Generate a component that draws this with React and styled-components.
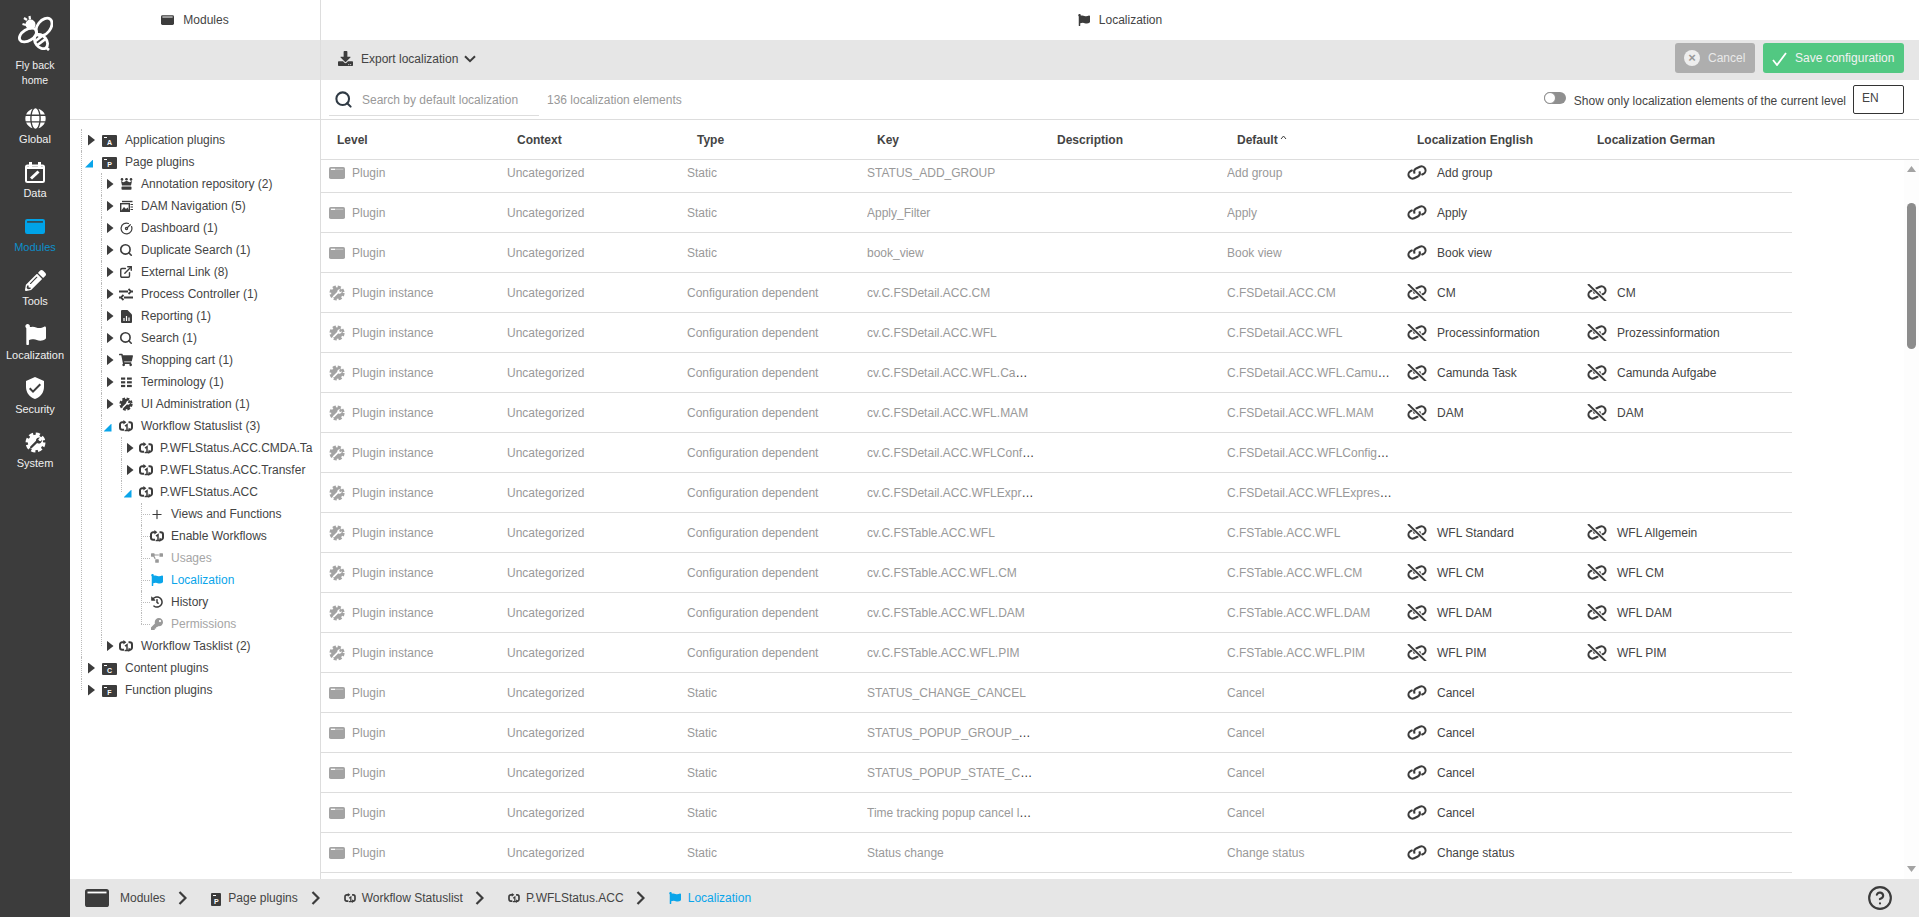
import React from "react";
import styled, { createGlobalStyle } from "styled-components";
import { Search, ExternalLink, Plus, CircleGauge, CircleHelp } from "lucide-react";
import { FaGlobe, FaPencilAlt, FaFlag, FaShoppingCart, FaProjectDiagram, FaHistory, FaKey, FaDownload } from "react-icons/fa";
import { MdVerifiedUser } from "react-icons/md";

const DARK = "#3c3c3c";
const BLUE = "#0aa5ea";

const GlobalStyle = createGlobalStyle`
    html, body {
        margin: 0;
        height: 100%;
        overflow: hidden;
    }
    body {
        font-family: "Liberation Sans", Arial, sans-serif;
        font-size: 12px;
        color: #444;
        background: #fff;
    }
    * {
        box-sizing: border-box;
    }
`;

function BeeLogo() {
    return (
        <svg width="36" height="36" viewBox="0 0 36 36" fill="none" stroke="#fff" strokeWidth="2.8">
            <circle cx="13.5" cy="9.5" r="5" fill="#fff" stroke="none" />
            <path d="M10 5 7 3M13 4.5 12.5 1M9 10 5.5 9" strokeWidth="2.2" />
            <ellipse cx="27" cy="12" rx="6.5" ry="10" transform="rotate(38 27 12)" />
            <ellipse cx="11" cy="20" rx="9.5" ry="5.6" transform="rotate(-32 11 20)" />
            <ellipse cx="24" cy="26.5" rx="5.6" ry="8" transform="rotate(-38 24 26.5)" />
            <path d="M18.5 26 25 21M20.5 30 28.5 24" />
            <path d="M29 32.5 32 35" />
        </svg>
    );
}

function CalendarIcon() {
    return (
        <svg width="20" height="21" viewBox="0 0 20 21" fill="none">
            <rect x="1" y="3.5" width="18" height="16.5" rx="1.5" stroke="#fff" strokeWidth="2" />
            <path d="M1 4.5h18v2.5H1z" fill="#fff" />
            <rect x="4" y="0" width="3" height="5" fill="#fff" />
            <rect x="13" y="0" width="3" height="5" fill="#fff" />
            <path d="M6 16.5 13.5 9.5" stroke="#fff" strokeWidth="3" />
        </svg>
    );
}

function WindowIcon({ width = 16, height = 12, color = DARK, bar = "#fff", shortBar }) {
    return (
        <svg width={width} height={height} viewBox="0 0 24 18">
            <rect x="0" y="0" width="24" height="18" rx="2.6" fill={color} />
            <rect x="2.5" y="2.6" width="19" height="1.8" fill={bar} opacity={shortBar ? 0.35 : 1} />
            {shortBar && <rect x="3" y="2.6" width="6" height="1.8" fill={bar} />}
        </svg>
    );
}

function GearWrench({ size = 14, color = DARK, cut = "#fff" }) {
    return (
        <svg width={size} height={size} viewBox="0 0 24 24" fill="none">
            <circle cx="12" cy="12" r="9.4" stroke={color} strokeWidth="4" strokeDasharray="4.6 2.78" />
            <circle cx="12" cy="12" r="8.8" fill={color} />
            <path d="M7 17.5 13.5 11" stroke={cut} strokeWidth="2.6" strokeLinecap="round" />
            <path d="M12.5 10.5a3.8 3.8 0 0 1 4.6-4.2l-2 2.2 1 1.6 2 .4 1.2-2a3.8 3.8 0 0 1-5 4.4z" fill={cut} />
        </svg>
    );
}

function LinkIcon({ broken }) {
    return (
        <svg width="20" height="17" viewBox="0 -2 20 17" fill="none" stroke={DARK} strokeWidth="2.1">
            <g transform="rotate(-25 10 6.5)">
                <path d="M7 2.5H5a4 4 0 0 0 0 8h4a4 4 0 0 0 3.6-4" />
                <path d="M13 10.5h2a4 4 0 0 0 0-8h-4a4 4 0 0 0-3.6 4" />
            </g>
            {broken && <path d="M1.5 -2 18.5 15" stroke="#fff" strokeWidth="3.8" />}
            {broken && <path d="M1 -2 19 15.5" strokeWidth="1.9" />}
        </svg>
    );
}

function ProcessIcon() {
    return (
        <svg width="14" height="13" viewBox="0 0 14 13" fill="none" stroke={DARK} strokeWidth="1.8">
            <path d="M0 3.5h9M11 3.5h3M9.5 1 12 3.5 9.5 6" />
            <path d="M14 9.5H5M3 9.5H0M4.5 7 2 9.5 4.5 12" />
        </svg>
    );
}

function ReportIcon() {
    return (
        <svg width="11" height="13" viewBox="0 0 11 13">
            <path d="M0 1a1 1 0 0 1 1-1h5.5L11 4.5V12a1 1 0 0 1-1 1H1a1 1 0 0 1-1-1z" fill={DARK} />
            <path d="M3 11V8M5.5 11V6M8 11V7.5" stroke="#fff" strokeWidth="1.2" />
        </svg>
    );
}

function GridListIcon() {
    return (
        <svg width="11" height="11" viewBox="0 0 11 11" fill={DARK}>
            <rect x="0" y="0.5" width="4.2" height="2.2" />
            <rect x="0" y="4.2" width="4.2" height="2.2" />
            <rect x="0" y="7.9" width="4.2" height="2.2" />
            <rect x="6" y="0.5" width="4.8" height="2.2" />
            <rect x="6" y="4.2" width="4.8" height="2.2" />
            <rect x="6" y="7.9" width="4.8" height="2.2" />
        </svg>
    );
}

function ImagesIcon() {
    return (
        <svg width="13" height="12" viewBox="0 0 13 12" fill="none">
            <path d="M2 1.5h10.5" stroke={DARK} strokeWidth="1.4" />
            <rect x="0.7" y="3.7" width="8.6" height="7.6" stroke={DARK} strokeWidth="1.4" />
            <path d="M1 11l3-4 2 2 1.5-1.5L9.5 11z" fill={DARK} />
            <path d="M10.5 4.5H13M10.5 7H13M10.5 9.5H13" stroke={DARK} strokeWidth="1.2" />
        </svg>
    );
}

function CrownIcon() {
    return (
        <svg width="13" height="12" viewBox="0 0 13 12" fill={DARK}>
            <circle cx="2" cy="1.4" r="1.3" />
            <circle cx="6.5" cy="1.2" r="1.3" />
            <circle cx="11" cy="1.4" r="1.3" />
            <path d="M1 3 3.5 4.2 6.5 2.8 9.5 4.2 12 3 11 7.6H2z" />
            <rect x="1.5" y="8.6" width="10" height="3.2" rx="0.8" />
        </svg>
    );
}

function WorkflowIcon({ size = 14 }) {
    return (
        <svg width={size} height={size - 2} viewBox="0 0 14 12" fill="none" stroke={DARK} strokeWidth="2">
            <path d="M5 2.2H3.2A2.2 2.2 0 0 0 1 4.4v3.2a2.2 2.2 0 0 0 2.2 2.2H5" />
            <path d="M9.5 9.8h1.3A2.2 2.2 0 0 0 13 7.6V4.4a2.2 2.2 0 0 0-2.2-2.2H9.5" />
            <path d="M4.4 0 7.4 2.2 4.4 4.4zM9.6 7.6 12 9.8 9.6 12z" fill={DARK} stroke="none" />
            <path d="M6 6.2 8 4.8v5.2M5.6 10.4h4.4" strokeWidth="1.5" />
        </svg>
    );
}

function Chevron() {
    return (
        <svg width="9" height="14" viewBox="0 0 9 14" fill="none" stroke={DARK} strokeWidth="2.2">
            <path d="M1.5 1 7.5 7 1.5 13" />
        </svg>
    );
}

const flag = (size, color) => <FaFlag size={size} color={color} />;
const workflow = <WorkflowIcon />;

const treeData = [
    { label: "Application plugins", badge: "A", top: true },
    {
        label: "Page plugins",
        badge: "P",
        top: true,
        open: true,
        children: [
            { label: "Annotation repository (2)", icon: <CrownIcon /> },
            { label: "DAM Navigation (5)", icon: <ImagesIcon /> },
            { label: "Dashboard (1)", icon: <CircleGauge size={13} strokeWidth={2.2} color={DARK} /> },
            { label: "Duplicate Search (1)", icon: <Search size={14} strokeWidth={2.8} color={DARK} /> },
            { label: "External Link (8)", icon: <ExternalLink size={14} strokeWidth={2.4} color={DARK} /> },
            { label: "Process Controller (1)", icon: <ProcessIcon /> },
            { label: "Reporting (1)", icon: <ReportIcon /> },
            { label: "Search (1)", icon: <Search size={14} strokeWidth={2.8} color={DARK} /> },
            { label: "Shopping cart (1)", icon: <FaShoppingCart size={14} color={DARK} /> },
            { label: "Terminology (1)", icon: <GridListIcon /> },
            { label: "UI Administration (1)", icon: <GearWrench size={14} /> },
            {
                label: "Workflow Statuslist (3)",
                icon: workflow,
                open: true,
                children: [
                    { label: "P.WFLStatus.ACC.CMDA.Ta", icon: workflow },
                    { label: "P.WFLStatus.ACC.Transfer", icon: workflow },
                    {
                        label: "P.WFLStatus.ACC",
                        icon: workflow,
                        open: true,
                        children: [
                            { label: "Views and Functions", leaf: true, icon: <Plus size={15} strokeWidth={2} color={DARK} /> },
                            { label: "Enable Workflows", leaf: true, icon: workflow },
                            { label: "Usages", leaf: true, disabled: true, icon: <FaProjectDiagram size={12} color="#999" /> },
                            { label: "Localization", leaf: true, active: true, icon: flag(12, BLUE) },
                            { label: "History", leaf: true, icon: <FaHistory size={12} color={DARK} /> },
                            { label: "Permissions", leaf: true, disabled: true, icon: <FaKey size={12} color="#999" /> },
                        ],
                    },
                ],
            },
            { label: "Workflow Tasklist (2)", icon: workflow },
        ],
    },
    { label: "Content plugins", badge: "C", top: true },
    { label: "Function plugins", badge: "F", top: true },
];

const plugin = (key, def) => ({ level: "Plugin", type: "Static", key, def, en: def, linked: true });
const instance = (key, def, en, de) => ({ level: "Plugin instance", type: "Configuration dependent", key, def, en, de });

const rows = [
    plugin("STATUS_ADD_GROUP", "Add group"),
    plugin("Apply_Filter", "Apply"),
    plugin("book_view", "Book view"),
    instance("cv.C.FSDetail.ACC.CM", "C.FSDetail.ACC.CM", "CM", "CM"),
    instance("cv.C.FSDetail.ACC.WFL", "C.FSDetail.ACC.WFL", "Processinformation", "Prozessinformation"),
    instance("cv.C.FSDetail.ACC.WFL.Camunda", "C.FSDetail.ACC.WFL.Camunda", "Camunda Task", "Camunda Aufgabe"),
    instance("cv.C.FSDetail.ACC.WFL.MAM", "C.FSDetail.ACC.WFL.MAM", "DAM", "DAM"),
    instance("cv.C.FSDetail.ACC.WFLConfiguration", "C.FSDetail.ACC.WFLConfiguration"),
    instance("cv.C.FSDetail.ACC.WFLExpression", "C.FSDetail.ACC.WFLExpression"),
    instance("cv.C.FSTable.ACC.WFL", "C.FSTable.ACC.WFL", "WFL Standard", "WFL Allgemein"),
    instance("cv.C.FSTable.ACC.WFL.CM", "C.FSTable.ACC.WFL.CM", "WFL CM", "WFL CM"),
    instance("cv.C.FSTable.ACC.WFL.DAM", "C.FSTable.ACC.WFL.DAM", "WFL DAM", "WFL DAM"),
    instance("cv.C.FSTable.ACC.WFL.PIM", "C.FSTable.ACC.WFL.PIM", "WFL PIM", "WFL PIM"),
    plugin("STATUS_CHANGE_CANCEL", "Cancel"),
    plugin("STATUS_POPUP_GROUP_CANCEL", "Cancel"),
    plugin("STATUS_POPUP_STATE_CANCEL", "Cancel"),
    plugin("Time tracking popup cancel label", "Cancel"),
    plugin("Status change", "Change status"),
];

const navItems = [
    { label: "Global", icon: <FaGlobe size={21} color="#fff" /> },
    { label: "Data", icon: <CalendarIcon /> },
    { label: "Modules", active: true, icon: <WindowIcon width={20} height={15} color="#00a3e8" bar={DARK} /> },
    { label: "Tools", icon: <FaPencilAlt size={21} color="#fff" /> },
    { label: "Localization", icon: <FaFlag size={21} color="#fff" /> },
    { label: "Security", icon: <MdVerifiedUser size={24} color="#fff" /> },
    { label: "System", icon: <GearWrench size={21} color="#fff" cut={DARK} /> },
];

const headers = ["Level", "Context", "Type", "Key", "Description", "Default", "Localization English", "Localization German"];

function TreeNode({ node, depth }) {
    return (
        <Node>
            <NodeRow>
                {node.leaf ? <LeafStub /> : (
                    <ToggleSlot $top={node.top}>
                        <Toggle $open={node.open} />
                    </ToggleSlot>
                )}
                <IconSlot $top={node.top} $tight={depth >= 2}>
                    {node.badge ? <PluginBadge>{node.badge}</PluginBadge> : node.icon}
                </IconSlot>
                <NodeLabel $active={node.active} $disabled={node.disabled}>{node.label}</NodeLabel>
            </NodeRow>
            {node.children && (
                <TreeList $nested>
                    {node.children.map((child) => <TreeNode key={child.label} node={child} depth={depth + 1} />)}
                </TreeList>
            )}
        </Node>
    );
}

function TableRow({ row }) {
    const isPlugin = row.level === "Plugin";
    return (
        <Row>
            <LevelCell>
                {isPlugin
                    ? <WindowIcon width={16} height={12} color="#a3a3a3" shortBar />
                    : <GearWrench size={16} color="#a3a3a3" />}
                <span>{row.level}</span>
            </LevelCell>
            <Cell><span>Uncategorized</span></Cell>
            <Cell><span>{row.type}</span></Cell>
            <Cell><span>{row.key}</span></Cell>
            <Cell />
            <Cell><span>{row.def}</span></Cell>
            <LocCell>
                {row.en && <LinkIcon broken={!row.linked} />}
                {row.en && <span>{row.en}</span>}
            </LocCell>
            <LocCell>
                {row.de && <LinkIcon broken />}
                {row.de && <span>{row.de}</span>}
            </LocCell>
        </Row>
    );
}

export default function App() {
    return (
        <>
            <GlobalStyle />
            <Shell>
                <Rail>
                    <LogoLink>
                        <BeeLogo />
                        <LogoLabel>Fly back<br />home</LogoLabel>
                    </LogoLink>
                    {navItems.map((item) => (
                        <NavItem key={item.label} $active={item.active}>
                            <NavIcon>{item.icon}</NavIcon>
                            <span>{item.label}</span>
                        </NavItem>
                    ))}
                </Rail>
                <Main>
                    <Panels>
                        <LeftPanel>
                            <PanelTitle>
                                <WindowIcon width={13} height={10} />
                                Modules
                            </PanelTitle>
                            <Band />
                            <LeftSpacer />
                            <Tree>
                                <TreeList>
                                    {treeData.map((node) => <TreeNode key={node.label} node={node} depth={0} />)}
                                </TreeList>
                            </Tree>
                        </LeftPanel>
                        <RightPanel>
                            <PanelTitle>
                                {flag(12, DARK)}
                                Localization
                            </PanelTitle>
                            <Toolbar>
                                <ExportButton>
                                    <FaDownload size={15} color={DARK} />
                                    <span>Export localization</span>
                                    <svg width="12" height="8" viewBox="0 0 12 8" fill="none" stroke={DARK} strokeWidth="2">
                                        <path d="M1 1.2 6 6.2 11 1.2" />
                                    </svg>
                                </ExportButton>
                                <ToolbarActions>
                                    <CancelButton>
                                        <CancelDot>×</CancelDot>
                                        Cancel
                                    </CancelButton>
                                    <SaveButton>
                                        <svg width="15" height="14" viewBox="0 0 15 14" fill="none" stroke="#fff" strokeWidth="1.8">
                                            <path d="M1 8 5 13 14 1" />
                                        </svg>
                                        Save configuration
                                    </SaveButton>
                                </ToolbarActions>
                            </Toolbar>
                            <SearchRow>
                                <SearchBox>
                                    <Search size={19} strokeWidth={2.6} color="#2f3a44" />
                                    <SearchInput placeholder="Search by default localization" />
                                </SearchBox>
                                <Count>136 localization elements</Count>
                                <FilterGroup>
                                    <ToggleSwitch />
                                    <FilterLabel>Show only localization elements of the current level</FilterLabel>
                                    <LangBox>EN</LangBox>
                                </FilterGroup>
                            </SearchRow>
                            <TableHead>
                                {headers.map((h) => (
                                    <HeadCell key={h}>
                                        {h}
                                        {h === "Default" && (
                                            <svg width="7" height="5" viewBox="0 0 7 5" fill="none" stroke={DARK} strokeWidth="1">
                                                <path d="M1 4 3.5 1 6 4" />
                                            </svg>
                                        )}
                                    </HeadCell>
                                ))}
                            </TableHead>
                            <TableBody>
                                <RowsClip>
                                    <Rows>
                                        {rows.map((row) => <TableRow key={row.key} row={row} />)}
                                    </Rows>
                                </RowsClip>
                                <ScrollTrack>
                                    <ScrollArrow />
                                    <ScrollThumb />
                                    <ScrollArrow $down />
                                </ScrollTrack>
                            </TableBody>
                        </RightPanel>
                    </Panels>
                    <Footer>
                        <Crumb>
                            <FooterLogo><WindowIcon width={24} height={18} /></FooterLogo>
                            <span>Modules</span>
                            <CrumbChevron><Chevron /></CrumbChevron>
                        </Crumb>
                        <Crumb>
                            <PluginBadge $small>P</PluginBadge>
                            <span>Page plugins</span>
                            <CrumbChevron><Chevron /></CrumbChevron>
                        </Crumb>
                        <Crumb $tight>
                            <WorkflowIcon size={12} />
                            <span>Workflow Statuslist</span>
                            <CrumbChevron><Chevron /></CrumbChevron>
                        </Crumb>
                        <Crumb $tight>
                            <WorkflowIcon size={12} />
                            <span>P.WFLStatus.ACC</span>
                            <CrumbChevron><Chevron /></CrumbChevron>
                        </Crumb>
                        <CurrentCrumb>
                            {flag(12, BLUE)}
                            <span>Localization</span>
                        </CurrentCrumb>
                        <HelpButton>
                            <CircleHelp size={26} strokeWidth={2} color={DARK} />
                        </HelpButton>
                    </Footer>
                </Main>
            </Shell>
        </>
    );
}

const Shell = styled.div`
    display: flex;
    height: 100vh;
    overflow: hidden;
`;

const Rail = styled.nav`
    width: 70px;
    flex-shrink: 0;
    background: ${DARK};
    color: #f0f0f0;
    padding-top: 15px;
    font-size: 11px;
`;

const LogoLink = styled.div`
    display: flex;
    flex-direction: column;
    align-items: center;
    margin-bottom: 16px;
`;

const LogoLabel = styled.div`
    margin-top: 7px;
    font-size: 10.5px;
    line-height: 15px;
    text-align: center;
`;

const NavItem = styled.div`
    height: 54px;
    display: flex;
    flex-direction: column;
    align-items: center;
    line-height: 14px;
    color: ${(p) => (p.$active ? "#0c8fca" : "#f0f0f0")};
`;

const NavIcon = styled.div`
    height: 28px;
    display: flex;
    align-items: center;
    justify-content: center;
`;

const Main = styled.main`
    flex: 1;
    min-width: 0;
    display: flex;
    flex-direction: column;
`;

const Panels = styled.div`
    flex: 1;
    min-height: 0;
    display: flex;
`;

const LeftPanel = styled.section`
    width: 250px;
    flex-shrink: 0;
    display: flex;
    flex-direction: column;
`;

const RightPanel = styled.section`
    flex: 1;
    min-width: 0;
    display: flex;
    flex-direction: column;
    border-left: 1px solid #ddd;
`;

const PanelTitle = styled.header`
    height: 40px;
    flex-shrink: 0;
    display: flex;
    align-items: center;
    justify-content: center;
    gap: 9px;
    color: #444;
`;

const Band = styled.div`
    height: 40px;
    flex-shrink: 0;
    background: #e6e6e6;
`;

const LeftSpacer = styled.div`
    height: 40px;
    flex-shrink: 0;
    border-bottom: 1px solid #ddd;
`;

const Tree = styled.div`
    flex: 1;
    padding: 9px 0 0 11px;
    overflow: hidden;
`;

const TreeList = styled.ul`
    list-style: none;
    margin: 0 0 0 ${(p) => (p.$nested ? "20px" : "0")};
    padding: 0;
`;

const Node = styled.li`
    position: relative;
    &::before {
        content: "";
        position: absolute;
        left: 0;
        top: 0;
        bottom: 0;
        border-left: 1px dotted #bbb;
    }
    &:last-child::before {
        bottom: auto;
        height: 11px;
    }
`;

const NodeRow = styled.div`
    position: relative;
    height: 22px;
    display: flex;
    align-items: center;
    white-space: nowrap;
`;

const ToggleSlot = styled.span`
    width: ${(p) => (p.$top ? "21px" : "18px")};
    flex-shrink: 0;
    display: flex;
    justify-content: center;
`;

const Toggle = styled.span`
    display: block;
    width: ${(p) => (p.$open ? "8px" : "7px")};
    height: ${(p) => (p.$open ? "8px" : "11px")};
    margin-top: ${(p) => (p.$open ? "3px" : "0")};
    margin-right: ${(p) => (p.$open ? "5px" : "0")};
    background: ${(p) => (p.$open ? BLUE : DARK)};
    clip-path: ${(p) => (p.$open ? "polygon(100% 0, 100% 100%, 0 100%)" : "polygon(0 0, 100% 50%, 0 100%)")};
`;

const LeafStub = styled.span`
    width: 9px;
    flex-shrink: 0;
    border-top: 1px dotted #bbb;
`;

const IconSlot = styled.span`
    width: ${(p) => (p.$top ? "15px" : "14px")};
    margin-right: ${(p) => (p.$tight ? "7px" : "8px")};
    flex-shrink: 0;
    display: flex;
    align-items: center;
    justify-content: center;
`;

const PluginBadge = styled.span`
    position: relative;
    display: flex;
    align-items: flex-end;
    justify-content: center;
    width: ${(p) => (p.$small ? "10px" : "15px")};
    height: ${(p) => (p.$small ? "13px" : "12px")};
    margin-top: 2px;
    background: ${DARK};
    border-radius: 1px;
    color: #fff;
    font-size: 7px;
    line-height: 9px;
    font-weight: 700;
    &::before {
        content: "";
        position: absolute;
        left: 2px;
        top: 2px;
        width: 3px;
        height: 1px;
        background: #fff;
    }
`;

const NodeLabel = styled.span`
    color: ${(p) => (p.$active ? BLUE : p.$disabled ? "#a5a5a5" : "#444")};
`;

const Toolbar = styled.div`
    height: 40px;
    flex-shrink: 0;
    display: flex;
    align-items: center;
    justify-content: space-between;
    padding: 0 15px 0 17px;
    background: #e6e6e6;
`;

const ExportButton = styled.div`
    display: flex;
    align-items: center;
    gap: 8px;
    color: #444;
    margin-top: -3px;
    svg:last-child {
        margin-left: -2px;
    }
`;

const ToolbarActions = styled.div`
    display: flex;
    gap: 8px;
    margin-top: -4px;
`;

const CancelButton = styled.div`
    width: 80px;
    height: 30px;
    display: flex;
    align-items: center;
    gap: 8px;
    padding-left: 9px;
    border-radius: 3px;
    background: #aeaeae;
    color: #e9e9e9;
`;

const CancelDot = styled.span`
    width: 16px;
    height: 16px;
    border-radius: 50%;
    background: #eee;
    color: #999;
    font-size: 13px;
    line-height: 16px;
    font-weight: 700;
    text-align: center;
`;

const SaveButton = styled.div`
    width: 141px;
    height: 30px;
    display: flex;
    align-items: center;
    gap: 8px;
    padding-left: 9px;
    border-radius: 3px;
    background: #52c882;
    color: #f2f2f2;
    white-space: nowrap;
    svg {
        margin-top: 2px;
    }
`;

const SearchRow = styled.div`
    height: 40px;
    flex-shrink: 0;
    display: flex;
    align-items: center;
    padding: 0 15px 0 8px;
    border-bottom: 1px solid #ddd;
`;

const SearchBox = styled.label`
    width: 210px;
    height: 32px;
    margin-top: 1px;
    display: flex;
    align-items: center;
    gap: 9px;
    padding-left: 5px;
    border-bottom: 1px solid #ddd;
`;

const SearchInput = styled.input`
    flex: 1;
    min-width: 0;
    border: 0;
    outline: 0;
    padding: 0;
    background: transparent;
    font: inherit;
    &::placeholder {
        color: #999;
        opacity: 1;
    }
`;

const Count = styled.span`
    margin-left: 8px;
    color: #999;
`;

const FilterGroup = styled.div`
    margin-left: auto;
    display: flex;
    align-items: center;
`;

const ToggleSwitch = styled.span`
    position: relative;
    width: 22px;
    height: 12px;
    margin-top: -3px;
    border-radius: 6px;
    background: #8f8f8f;
    &::before {
        content: "";
        position: absolute;
        left: 0;
        top: 0;
        width: 12px;
        height: 12px;
        box-sizing: border-box;
        border-radius: 50%;
        border: 1px solid #8f8f8f;
        background: #fff;
    }
`;

const FilterLabel = styled.span`
    margin: 2px 7px 0 8px;
    color: #444;
`;

const LangBox = styled.div`
    width: 51px;
    height: 29px;
    margin-top: -1px;
    padding: 0 8px 2px;
    display: flex;
    align-items: center;
    border: 1px solid #333;
    border-radius: 2px;
`;

const TableHead = styled.div`
    height: 40px;
    flex-shrink: 0;
    display: grid;
    grid-template-columns: repeat(8, 180px);
    align-items: center;
    border-bottom: 1px solid #ddd;
`;

const HeadCell = styled.div`
    display: flex;
    align-items: center;
    gap: 2px;
    padding-left: 16px;
    font-weight: 700;
    color: #444;
    svg {
        margin-bottom: 4px;
    }
`;

const TableBody = styled.div`
    flex: 1;
    min-height: 0;
    display: flex;
`;

const RowsClip = styled.div`
    width: 1471px;
    overflow: hidden;
`;

const Rows = styled.div`
    margin-top: -7px;
`;

const Row = styled.div`
    height: 40px;
    display: grid;
    grid-template-columns: repeat(7, 180px) 205px;
    align-items: center;
    padding-left: 6px;
    border-bottom: 1px solid #ddd;
`;

const Cell = styled.div`
    padding-right: 12px;
    color: #333;
    white-space: nowrap;
    overflow: hidden;
    text-overflow: ellipsis;
    span {
        color: #999;
    }
`;

const LevelCell = styled.div`
    display: flex;
    align-items: center;
    gap: 7px;
    padding-left: 2px;
    color: #999;
`;

const LocCell = styled.div`
    display: flex;
    align-items: center;
    gap: 10px;
    color: #444;
`;

const ScrollTrack = styled.div`
    margin-left: auto;
    width: 15px;
    display: flex;
    flex-direction: column;
    align-items: center;
    padding: 6px 0 7px;
    background: #fdfdfd;
`;

const ScrollArrow = styled.span`
    width: 9px;
    height: 6px;
    flex-shrink: 0;
    margin-top: ${(p) => (p.$down ? "auto" : "0")};
    background: #a3a3a3;
    clip-path: ${(p) => (p.$down ? "polygon(0 0, 100% 0, 50% 100%)" : "polygon(50% 0, 100% 100%, 0 100%)")};
`;

const ScrollThumb = styled.span`
    width: 9px;
    height: 146px;
    margin-top: 31px;
    border-radius: 5px;
    background: #8c8c8c;
`;

const Footer = styled.footer`
    height: 38px;
    flex-shrink: 0;
    display: flex;
    align-items: center;
    padding: 0 26px 0 15px;
    background: #e6e6e6;
`;

const Crumb = styled.div`
    display: flex;
    align-items: center;
    gap: ${(p) => (p.$tight ? "6px" : "7px")};
    color: #444;
    & + & {
        margin-left: 24px;
    }
`;

const FooterLogo = styled.span`
    display: flex;
    margin-right: 4px;
`;

const CrumbChevron = styled.span`
    display: flex;
    margin-left: 6px;
`;

const CurrentCrumb = styled(Crumb)`
    color: ${BLUE};
    margin-left: 24px;
`;

const HelpButton = styled.div`
    margin-left: auto;
    display: flex;
`;
